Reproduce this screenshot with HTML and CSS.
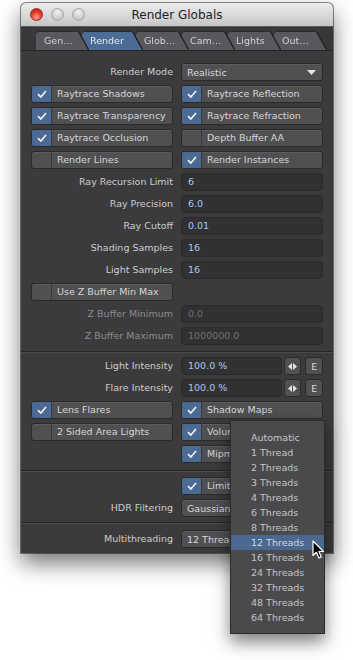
FILE: index.html
```html
<!DOCTYPE html>
<html lang="en">
<head>
  <meta charset="UTF-8" />
  <title>Render Globals</title>
  <link rel="stylesheet" href="styles.css">
</head>
<body>
  <div class="window">
    <div class="titlebar">
      <div class="lights">
        <span class="light close"></span>
        <span class="light"></span>
        <span class="light"></span>
      </div>
      <div class="title">Render Globals</div>
      <div></div>
    </div>

    <div class="tabbar">
      <div class="tab"><div class="tab-face">Gen…</div></div>
      <div class="tab wide active"><div class="tab-face">Render</div></div>
      <div class="tab"><div class="tab-face">Glob…</div></div>
      <div class="tab"><div class="tab-face">Cam…</div></div>
      <div class="tab"><div class="tab-face">Lights</div></div>
      <div class="tab"><div class="tab-face">Out…</div></div>
    </div>

    <div class="section first">
      <div class="label">Render Mode</div>
      <div class="select">Realistic<svg class="caret" width="9" height="5" viewBox="0 0 9 5"><path d="M0 0H9L4.5 5Z" fill="#e6e6e6"/></svg></div>

      <div class="check on"><span class="box"></span><span class="text">Raytrace Shadows</span></div>
      <div class="check on"><span class="box"></span><span class="text">Raytrace Reflection</span></div>
      <div class="check on"><span class="box"></span><span class="text">Raytrace Transparency</span></div>
      <div class="check on"><span class="box"></span><span class="text">Raytrace Refraction</span></div>
      <div class="check on"><span class="box"></span><span class="text">Raytrace Occlusion</span></div>
      <div class="check"><span class="box"></span><span class="text">Depth Buffer AA</span></div>
      <div class="check"><span class="box"></span><span class="text">Render Lines</span></div>
      <div class="check on"><span class="box"></span><span class="text">Render Instances</span></div>

      <div class="label">Ray Recursion Limit</div>
      <div class="field">6</div>
      <div class="label">Ray Precision</div>
      <div class="field">6.0</div>
      <div class="label">Ray Cutoff</div>
      <div class="field">0.01</div>
      <div class="label">Shading Samples</div>
      <div class="field">16</div>
      <div class="label">Light Samples</div>
      <div class="field">16</div>

      <div class="check"><span class="box"></span><span class="text">Use Z Buffer Min Max</span></div>
      <div></div>
      <div class="label dim">Z Buffer Minimum</div>
      <div class="field dim">0.0</div>
      <div class="label dim">Z Buffer Maximum</div>
      <div class="field dim">1000000.0</div>
    </div>

    <div class="section second">
      <div class="label">Light Intensity</div>
      <div class="field-group">
        <div class="field">100.0 %</div>
        <div class="mini"><svg width="9" height="7" viewBox="0 0 9 7"><path d="M4 0V7L0 3.5Z M5 0V7L9 3.5Z" fill="#e2e2e2"/></svg></div>
        <div class="mini">E</div>
      </div>
      <div class="label">Flare Intensity</div>
      <div class="field-group">
        <div class="field">100.0 %</div>
        <div class="mini"><svg width="9" height="7" viewBox="0 0 9 7"><path d="M4 0V7L0 3.5Z M5 0V7L9 3.5Z" fill="#e2e2e2"/></svg></div>
        <div class="mini">E</div>
      </div>
      <div class="check on"><span class="box"></span><span class="text">Lens Flares</span></div>
      <div class="check on"><span class="box"></span><span class="text">Shadow Maps</span></div>
      <div class="check"><span class="box"></span><span class="text">2 Sided Area Lights</span></div>
      <div class="check on"><span class="box"></span><span class="text">Volumetric Lights</span></div>
      <div></div>
      <div class="check on"><span class="box"></span><span class="text">Mipmap Pixel Filter</span></div>
    </div>

    <div class="section third">
      <div></div>
      <div class="check on"><span class="box"></span><span class="text">Limit Dynamic Range</span></div>
      <div class="label">HDR Filtering</div>
      <div class="select">Gaussian</div>
    </div>

    <div class="section fourth">
      <div class="label">Multithreading</div>
      <div class="select">12 Threads</div>
    </div>
  </div>

  <ul class="popup">
    <li>Automatic</li>
    <li>1 Thread</li>
    <li>2 Threads</li>
    <li>3 Threads</li>
    <li>4 Threads</li>
    <li>6 Threads</li>
    <li>8 Threads</li>
    <li class="current">12 Threads</li>
    <li>16 Threads</li>
    <li>24 Threads</li>
    <li>32 Threads</li>
    <li>48 Threads</li>
    <li>64 Threads</li>
  </ul>

  <svg class="cursor" width="13" height="19" viewBox="0 0 13 19">
    <path d="M1 1V15.5L4.4 12.3L6.9 18L9.3 17L6.9 11.5H11.5Z" fill="#000" stroke="#fff" stroke-width="1.2" stroke-linejoin="round"/>
  </svg>
</body>
</html>
```

FILE: styles.css
```css
body {
  margin: 0;
  background-color: #fff;
  font-family: 'DejaVu Sans', 'Liberation Sans', sans-serif;
  font-size: 9.5px;
  color: #cfcfcf;
  position: relative;
  height: 660px;
  overflow: hidden;
}

.window {
  margin: 3px 0 0 21px;
  width: 312px;
  background-color: #3b3b3d;
  border-radius: 5px 5px 0 0;
  box-shadow: 0 10px 22px rgba(0, 0, 0, 0.55), 0 0 0 1px rgba(0, 0, 0, 0.45);
}

/* title bar */

.titlebar {
  display: grid;
  grid-template-columns: 1fr auto 1fr;
  align-items: center;
  height: 24px;
  background: linear-gradient(#ececec, #c6c6c6);
  border-radius: 5px 5px 0 0;
  border-bottom: 1px solid #5a5a5a;
  box-sizing: border-box;
}

.lights {
  display: flex;
  gap: 8px;
  padding-left: 9px;
}

.light {
  width: 13px;
  height: 13px;
  border-radius: 50%;
  box-sizing: border-box;
  border: 1px solid #a4a4a4;
  background: radial-gradient(circle at 50% 30%, #f2f2f2, #cfcfcf 60%, #bdbdbd);
}

.light.close {
  border-color: #9c2a22;
  background: radial-gradient(circle at 50% 75%, #ff9a8c, #e2382c 55%, #b3180f);
}

.title {
  font-size: 12px;
  color: #1e1e1e;
}

/* tabs */

.tabbar {
  display: flex;
  align-items: flex-end;
  height: 24px;
  padding-left: 15px;
  box-sizing: border-box;
  background-color: #38383a;
  border-bottom: 1px solid #242424;
}

.tab {
  position: relative;
  width: 52px;
  height: 18px;
  margin-right: -6px;
  filter: drop-shadow(1px 0 0 #1f1f1f) drop-shadow(0 -1px 0 #2a2a2a);
}

.tab.wide { width: 60px; }

.tab:nth-child(1) { z-index: 6; }
.tab:nth-child(2) { z-index: 5; }
.tab:nth-child(3) { z-index: 4; }
.tab:nth-child(4) { z-index: 3; }
.tab:nth-child(5) { z-index: 2; }
.tab:nth-child(6) { z-index: 1; }

.tab-face {
  height: 100%;
  padding-left: 8px;
  line-height: 18px;
  background-color: #59595d;
  color: #d2d2d2;
  border-radius: 3px 0 0 0;
  clip-path: polygon(0 0, calc(100% - 10px) 0, 100% 100%, 0 100%);
}

.tab.active .tab-face {
  background-color: #4b6c95;
  color: #e2e8f0;
}

/* sections */

.section {
  display: grid;
  grid-template-columns: 142px 142px;
  grid-auto-rows: 18px;
  column-gap: 8px;
  row-gap: 4px;
  padding: 6px 10px;
  border-top: 1px solid #262626;
  box-shadow: inset 0 1px 0 #4a4a4c;
}

.section.first {
  padding: 12px 10px 6px;
  border-top: none;
  box-shadow: none;
}

.section.second { padding: 5px 10px 7px; }
.section.third { padding: 6px 10px 5px; }
.section.fourth { padding: 7px 10px 5px; }

.label {
  text-align: right;
  line-height: 18px;
  white-space: nowrap;
  color: #cdcdcd;
}

.label.dim { color: #8c8c8c; }

.field {
  line-height: 16px;
  padding-left: 6px;
  background-color: #313133;
  border: 1px solid #2a2a2a;
  border-radius: 3px;
  color: #a9c7f2;
}

.field.dim { color: #707072; }

.field-group {
  display: flex;
}

.field-group .field {
  width: 94px;
  margin-right: 2px;
}

.mini {
  width: 16px;
  height: 16px;
  margin-right: 4px;
  display: flex;
  align-items: center;
  justify-content: center;
  background-color: #505053;
  border: 1px solid #2a2a2a;
  border-radius: 3px;
  color: #d8d8d8;
}

.mini:last-child { margin-right: 0; }

.select {
  display: flex;
  align-items: center;
  justify-content: space-between;
  padding: 0 6px 0 5px;
  background-color: #505053;
  border: 1px solid #2a2a2a;
  border-radius: 3px;
  box-shadow: inset 0 1px 0 #5c5c5f;
  color: #d8d8d8;
  white-space: nowrap;
}

.check {
  display: flex;
  background-color: #505053;
  border: 1px solid #2a2a2a;
  border-radius: 3px;
  box-shadow: inset 0 1px 0 #5c5c5f;
  overflow: hidden;
  white-space: nowrap;
}

.check .box {
  width: 19px;
  flex: none;
  border-right: 1px solid #3a3a3c;
}

.check.on .box {
  background: #4a6a93 url("data:image/svg+xml,%3Csvg xmlns='http://www.w3.org/2000/svg' width='10' height='8'%3E%3Cpath d='M1 4.2L3.8 7L9 1' fill='none' stroke='%23eef2f8' stroke-width='1.7'/%3E%3C/svg%3E") no-repeat center;
}

.check .text {
  padding-left: 5px;
  line-height: 16px;
  color: #d6d6d6;
}

/* popup menu */

.popup {
  position: absolute;
  left: 230px;
  top: 420px;
  width: 93px;
  margin: 0;
  padding: 9px 0 8px;
  list-style: none;
  background-color: #4a4a4d;
  border: 1px solid #2c2c2c;
  box-shadow: 0 8px 16px rgba(0, 0, 0, 0.5);
  z-index: 10;
}

.popup li {
  height: 15px;
  line-height: 15px;
  padding-left: 20px;
  color: #c4c4c4;
}

.popup li.current {
  background-color: #4a6890;
  color: #cdd6e2;
}

.cursor {
  position: absolute;
  left: 312px;
  top: 540px;
  z-index: 11;
}
```
